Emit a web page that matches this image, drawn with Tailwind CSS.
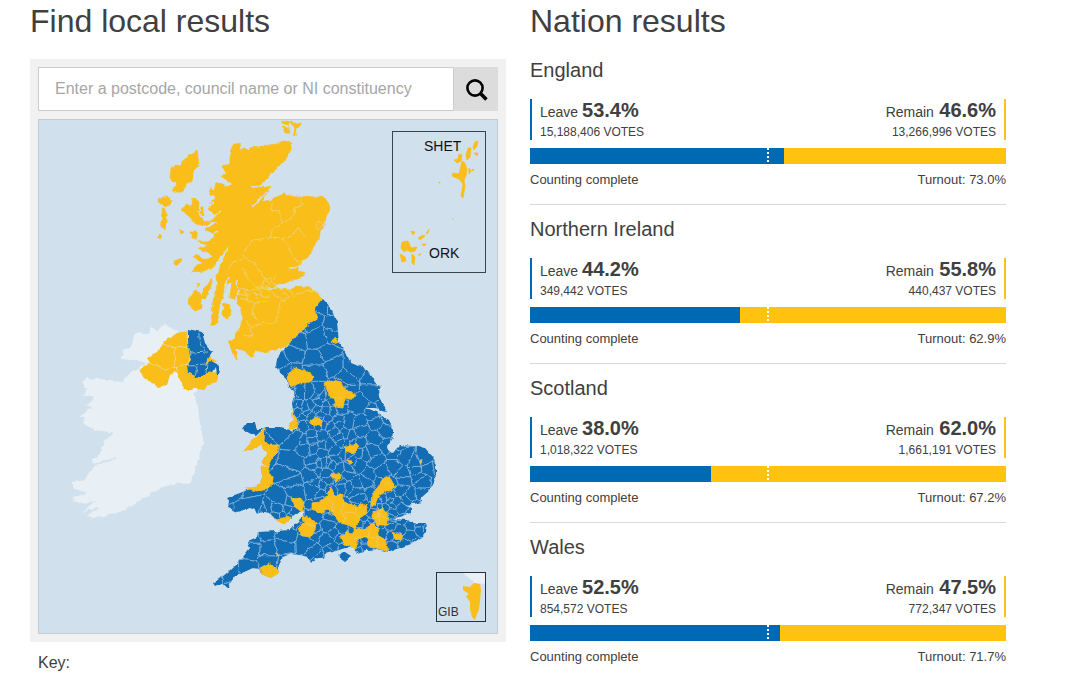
<!DOCTYPE html>
<html lang="en">
  <head>
    <meta charset="UTF-8" />
    <meta name="viewport" content="width=device-width, initial-scale=1.0" />
    <title>Results</title>
    <script src="https://cdn.jsdelivr.net/npm/@tailwindcss/browser@4"></script>
  </head>
  <body
    class="bg-white text-[#404040] font-['Liberation_Sans',Arial,sans-serif] overflow-hidden"
  >
    <div class="flex h-[676px] pl-[30px] pt-[3px] gap-6">
      <!-- Local results -->
      <section class="w-[476px]">
        <h1 class="text-[32px] leading-9">Find local results</h1>
        <div class="mt-5 h-[583px] bg-[#f1f1f1] p-2">
          <form class="flex h-11">
            <input
              type="text"
              class="w-[415px] border border-r-0 border-[#ccc] bg-white pl-4 text-base placeholder:text-[#a6a6a6]"
              placeholder="Enter a postcode, council name or NI constituency"
            />
            <button
              type="button"
              class="flex w-[45px] items-center justify-center border-l border-[#ccc] bg-[#dcdcdc]"
            >
              <svg
                class="mt-0.5 ml-0.5 h-6 w-6"
                viewBox="0 0 24 24"
                fill="none"
                stroke="#000"
              >
                <circle cx="10" cy="10" r="7.6" stroke-width="2.6" />
                <path d="M15.3 15.3L21.4 21.4" stroke-width="3.6" />
              </svg>
            </button>
          </form>

          <!-- Map -->
          <div class="mt-2 h-[515px] border border-[#c3ccd3] bg-[#d0e0ec]">
            <svg class="h-[513px] w-[458px]" viewBox="39 120 458 513">
              <defs>
                <filter id="rough" x="0" y="0" width="1" height="1" color-interpolation-filters="sRGB">
                  <feTurbulence type="fractalNoise" baseFrequency="0.16" numOctaves="2" seed="4" />
                  <feDisplacementMap in="SourceGraphic" scale="4.5" xChannelSelector="R" yChannelSelector="G" />
                </filter>
                <path
                  id="ew"
                  d="M322 299L332 310 337 322 339 342 345 350 350 362 365 368 372 378 377 385 381 387 378 389 379 397 387 412 382 411 375 408 365 408 376 411 388 420 393 430 393 438 387 447 388 450 393 453 397 448 400 445 413 446 425 448 433 457 436 466 436 477 430 490 422 497 422 502 413 504 405 505 411 508 411 513 400 517 392 519 407 520 412 523 427 523 426 532 422 537 413 542 410 544 402 547 390 552 387 552 378 549 367 550 358 553 353 547 345 548 333 552 325 554 324 559 315 558 311 563 308 557 300 555 290 554 283 557 279 565 277 572 271 578 262 574 259 569 253 568 242 573 233 578 228 588 222 583 215 586 213 583 222 577 228 572 243 557 250 548 248 542 257 538 258 532 277 531 290 530 297 522 303 516 304 510 297 513 290 518 283 523 275 519 270 513 263 512 257 514 255 510 250 508 237 512 228 508 229 502 226 498 240 493 247 490 257 487 263 478 261 467 265 467 262 462 267 453 260 445 250 450 243 452 250 447 255 438 265 428 280 428 290 430 300 429 297 425 295 417 293 410 292 403 295 393 288 387 287 380 282 375 276 367 277 358 283 350 290 343 295 337 303 332 305 327 312 322 318 318 317 313 315 308Z"
                />
                <clipPath id="ewClip"><use href="#ew" /></clipPath>
              </defs>

              <g filter="url(#rough)">
                <rect x="39" y="120" width="458" height="513" fill="#d0e0ec" />

                <!-- Republic of Ireland -->
                <path
                  fill="#e8eff5"
                  d="M120 359L125 353 122 350 130 348 133 342 132 338 137 333 148 333 152 328 157 331 165 323 170 328 178 331 170 355 190 380 198 390 193 393 198 407 200 425 203 443 198 460 193 477 192 483 177 483 160 488 148 495 137 502 125 510 110 515 92 518 88 515 100 507 82 512 95 502 75 503 73 497 87 493 72 487 72 482 85 480 90 472 95 465 92 462 102 450 103 442 115 433 95 430 82 423 85 418 80 415 93 407 85 405 95 398 82 395 87 390 82 382 87 378 110 380 122 382 130 373 147 363 134 360Z"
                />
                <path fill="none" d="M91 433L96 438 103 441M90 465L101 463 117 458" stroke="#d0e0ec" stroke-width="1.5" />

                <!-- Northern Ireland -->
                <path
                  fill="#fabe1b"
                  d="M188 331L177 333 168 338 162 345 157 353 147 358 150 363 139 370 145 378 158 387 167 385 170 375 175 372 180 380 185 390 192 390 194 387 202 391 208 385 217 380 217 372 208 370 207 364 218 361 210 358Z"
                />
                <path
                  fill="#126db5"
                  d="M188 329L202 332 205 343 212 352 207 360 206 365 211 361 219 365 220 373 217 375 216 367 213 372 207 373 202 377 195 378 193 375 188 372 187 365 191 360 188 347Z"
                />
                <path
                  fill="none"
                  stroke="#e0e7dc"
                  stroke-width="0.6"
                  d="M187 331L188 347 191 354 188 365M162 345L176 347 190 346M176 347L174 362 178 372M150 363L165 370 187 364M199 333L199 340 205 351M190 353L208 352M188 365L207 364M197 366L195 376M207 364L206 373"
                />

                <!-- Scotland -->
                <g fill="#fabe1b" stroke="#fabe1b" stroke-width="0.8">
                  <path
                    d="M234 143L240 145 241 150 245 148 249 150 250 147 259 148 270 145 278 144 283 141 292 142 291 149 288 156 280 166 271 173 263 183 258 186 270 187 267 193 262 202 271 200 283 194 297 196 312 197 323 196 327 200 330 208 327 215 323 228 318 239 315 245 308 257 300 264 290 268 287 272 297 267 299 270 305 273 302 277 293 280 283 284 273 286 280 289 290 290 298 286 307 287 318 293 322 299 315 308 317 313 318 318 312 322 305 327 303 332 295 337 290 343 275 350 262 352 255 350 252 358 243 350 235 348 237 360 233 355 231 348 228 343 233 340 240 327 243 318 242 310 237 303 236 294 234 300 230 296 232 282 226 286 223 296 219 307 218 318 216 325 210 325 212 315 213 303 214 295 218 285 217 276 222 262 229 247 218 258 214 267 204 272 192 271 197 265 204 263 193 258 197 255 209 260 213 256 198 248 208 246 198 241 208 241 215 237 210 232 205 230 217 223 212 220 221 213 215 215 208 208 213 205 208 203 217 198 210 195 210 187 215 190 217 183 225 187 232 183 222 177 227 172 222 167 230 163 230 152Z"
                  />
                  <!-- Western Isles -->
                  <path
                    d="M197 150L198 158 199 166 193 172 192 181 186 184 181 192 173 192 176 184 170 178 171 168 180 165 186 158ZM158 200L168 196 171 202 167 207 159 202ZM162 209L166 210 166 222 165 229 160 227 163 218ZM157 237L161 233 162 236 159 239Z"
                  />
                  <!-- Skye and the inner isles -->
                  <path
                    d="M193 197L199 203 198 212 204 222 213 220 205 226 196 224 190 217 181 210 186 204 192 207ZM201 207L203 207 203 215 200 213ZM190 232L197 232 197 240 192 237ZM174 261L181 258 180 263 175 264ZM188 303L195 290 200 293 202 307 196 311 189 305ZM211 279L213 283 205 298 201 297 205 287ZM224 304L230 306 231 316 226 319 222 312ZM197 283L200 284 197 288ZM180 230L184 232 181 234Z"
                  />
                  <!-- Orkney on the mainland side -->
                  <path
                    d="M283 120L290 122 288 125 283 123ZM282 127L288 128 289 133 285 133ZM290 121L297 124 302 123 300 127 297 128 296 136 294 135 295 127 290 124Z"
                  />
                </g>
                <path
                  fill="none"
                  stroke="#d0e0ec"
                  stroke-width="1.4"
                  d="M252 187L262 186M253 206L258 202 266 192M229 247L222 256 217 262M229 277L225 288 224 296M237 280L238 292 236 302M215 216L221 212M268 288L276 288M208 202L214 204M211 235L218 231"
                />
                <path
                  fill="none"
                  stroke="#e6d898"
                  stroke-width="0.7"
                  d="M271 202L273 210 280 212 282 223 272 230 270 238 253 240 247 247 242 252 245 259 255 263 260 273 272 286M300 198L303 205 295 208 293 217 283 223M270 237L283 239 293 234 297 227 305 236M271 237L283 239 290 248 292 257 300 263M315 224L320 221 324 225 318 230 315 224M243 259L233 262 229 268M242 268L247 278 255 287 268 287M240 288L250 290 267 288 280 300 278 317 273 324 263 322 252 327 245 322M257 287L262 295 270 298M281 292L290 296 283 301 280 298M245 290L248 300 255 303 252 312 257 320M248 300L240 298M255 303L268 302M250 327L252 337 243 335M290 290L295 297 305 290 318 293M262 288L264 280 272 279M276 275L272 282 275 286M255 292L258 300M238 293L246 295 253 293 262 296"
                />

                <!-- England and Wales -->
                <use href="#ew" fill="#126db5" />
                <path
                  fill="#126db5"
                  d="M243 429L247 423 255 423 257 429 262 429 255 436 248 433ZM338 556L345 552 351 556 345 561Z"
                />
                <path
                  id="districts"
                  clip-path="url(#ewClip)"
                  fill="none"
                  stroke="#8fbbdf"
                  stroke-width="0.6"
                />
                <g fill="#fabe1b" stroke="#fabe1b" stroke-width="0.8">
                  <path d="M290 371L295 368 310 373 314 378 310 382 300 383 290 387 287 378Z" />
                  <path d="M331 342L336 338 339 342 334 344Z" />
                  <path
                    d="M325 383L335 380 341 383 345 390 353 391 356 397 350 399 345 398 343 407 335 406 333 398 328 395Z"
                  />
                  <path d="M292 412L297 422 299 428 288 428 290 423 294 420Z" />
                  <path d="M311 421L317 416 322 421 321 426 312 425Z" />
                  <path d="M345 448L357 443 359 447 352 454 346 452Z" />
                  <path d="M347 460L353 461 350 464Z" />
                  <path d="M330 475L340 474 341 478 336 482Z" />
                  <path
                    d="M312 503L320 502 327 496 330 487 335 495 343 495 344 503 357 506 366 504 367 513 360 518 355 530 368 528 373 523 377 527 378 535 385 540 388 551 377 548 368 546 367 538 358 538 355 548 345 545 340 537 347 532 353 533 353 526 340 523 335 517 330 510 317 513 312 510Z"
                  />
                  <path d="M292 498L300 497 304 503 302 512 295 507Z" />
                  <path
                    d="M303 516L308 518 316 522 315 530 310 537 300 535 299 530 305 523Z"
                  />
                  <path
                    d="M378 487L382 480 385 476 390 478 396 488 387 490 380 495 377 502 373 507 371 503 372 495Z"
                  />
                  <path d="M373 512L382 507 387 513 388 525 377 525 373 518Z" />
                  <path d="M390 532L402 535 403 540 396 539Z" />
                  <path d="M275 519L290 517 287 522 281 523Z" />
                  <path
                    d="M260 568L269 563 276 568 278 573 271 578 262 574Z"
                  />
                  <path
                    d="M243 452L255 438 265 428 264 440 269 445 279 445 278 452 272 458 268 466 271 475 272 478 271 487 257 491 245 488 257 487 263 478 261 467 265 467 262 462 267 453 260 445 250 450Z"
                  />
                </g>
                <g fill="#c9bf83">
                  <circle cx="278" cy="554" r="1.8" />
                  <circle cx="421.500" cy="462" r="1.8" />
                </g>
                <path
                  fill="none"
                  stroke="#e3d489"
                  stroke-width="0.6"
                  d="M327 498L333 505 333 513M344 503L340 510 345 518 343 524M344 512L354 513 357 506M354 513L360 518M333 398L345 397M376 513L387 518M380 508L379 525M374 518L383 514M355 538L368 537 370 529M368 537L378 538M378 536L377 547M305 523L315 526M262 466L270 467M382 480L390 487"
                />
              </g>

              <!-- Shetland and Orkney inset -->
              <rect x="392.500" y="131.500" width="93" height="141" fill="#d0e0ec" stroke="#3b444b" />
              <g fill="#fabe1b" stroke="#fabe1b" stroke-width="0.8">
                <path
                  d="M475 142L478 141 477 146 474 150 473 147ZM468 148L471 148 470 157 467 160 466 155ZM474 153L478 153 477 156ZM459 154L462 155 461 161 457 163 454 160 458 159ZM462 161L465 163 467 170 466 176 464 180 465 186 463 198 461 196 463 184 459 179 452 176 453 173 459 174 460 170ZM469 168L471 171 469 174ZM472 169L474 170 472 171Z"
                />
                <path
                  d="M402 242L408 241 411 248 417 247 415 251 411 252 407 250 404 252 401 248ZM400 254L405 257 406 261 402 262ZM412 254L415 257 414 265 412 263ZM411 231L415 232 413 235ZM418 238L423 235 425 236 420 240ZM426 234L429 229 428 233ZM422 244L426 244 424 246ZM419 254L421 254 419 256Z"
                />
                <circle cx="439.500" cy="182.500" r="0.6" />
                <circle cx="453" cy="219" r="0.3" />
              </g>
              <g class="text-sm" fill="#111">
                <text x="424" y="151">SHET</text>
                <text x="429" y="258">ORK</text>
              </g>

              <!-- Gibraltar inset -->
              <path d="M463 573H485V584L475 583Z" fill="#e8eff5" />
              <path
                fill="#fabe1b"
                d="M474 583L480 584 481 590 480 601 479 609 477 614 475 620 472 617 470 609 470 602 466 596 469 594 463 590 463 586 470 587Z"
              />
              <rect x="436.500" y="572.500" width="49" height="49" fill="none" stroke="#262f3b" />
              <text x="438" y="616" class="text-xs" fill="#333">GIB</text>
            </svg>
          </div>
        </div>
        <p class="mt-[9px] ml-2 text-base leading-6">Key:</p>
      </section>

      <!-- Nation results -->
      <section class="w-[476px]">
        <h1 class="text-[32px] leading-9">Nation results</h1>
        <div id="nations" class="mt-[7px]"></div>
      </section>
    </div>

    <script>
      const nations = [
        ["England", 53.4, "15,188,406", 46.6, "13,266,996", "73.0"],
        ["Northern Ireland", 44.2, "349,442", 55.8, "440,437", "62.9"],
        ["Scotland", 38.0, "1,018,322", 62.0, "1,661,191", "67.2"],
        ["Wales", 52.5, "854,572", 47.5, "772,347", "71.7"],
      ];

      document.getElementById("nations").innerHTML = nations
        .map(
          ([name, leave, leaveVotes, remain, remainVotes, turnout]) => `
          <article class="h-[159px] border-b border-[#d9d9d9] pt-3 last:border-b-0">
            <h2 class="text-xl leading-6">${name}</h2>
            <div class="mt-[17px] flex h-[41px] justify-between">
              <div class="border-l-2 border-[#0069b4] pl-2">
                <p class="text-sm leading-[22px]">Leave <b class="text-xl leading-[22px]">${leave.toFixed(1)}%</b></p>
                <p class="mt-px text-xs leading-[17px]">${leaveVotes} VOTES</p>
              </div>
              <div class="border-r-2 border-[#ffc20f] pr-2 text-right">
                <p class="text-sm leading-[22px]">Remain <b class="ml-[1.5px] text-xl leading-[22px]">${remain.toFixed(1)}%</b></p>
                <p class="mt-px text-xs leading-[17px]">${remainVotes} VOTES</p>
              </div>
            </div>
            <div class="relative mt-2 h-4 bg-[#ffc20f]">
              <div class="h-4 bg-[#0069b4]" style="width: ${leave}%"></div>
              <div class="absolute left-[237px] top-0 h-4 w-0.5 bg-[repeating-linear-gradient(to_bottom,#fff_0,#fff_2px,transparent_2px,transparent_4px)]"></div>
            </div>
            <div class="mt-1.5 flex justify-between text-[13px] leading-5">
              <span>Counting complete</span>
              <span>Turnout: ${turnout}%</span>
            </div>
          </article>`
        )
        .join("");

      // District borders: one cell per point, points packed tighter round the cities
      // x, y, width, height, spacing
      const zones = [
        [274, 296, 74, 70, 17],
        [274, 366, 70, 26, 15],
        [344, 366, 50, 50, 16],
        [290, 392, 54, 38, 7.5],
        [344, 416, 56, 36, 12],
        [222, 428, 62, 80, 24],
        [284, 430, 26, 78, 17],
        [310, 430, 42, 56, 8.5],
        [352, 452, 88, 46, 11.5],
        [250, 508, 50, 16, 8],
        [310, 486, 42, 38, 12],
        [352, 498, 24, 30, 8.5],
        [376, 498, 18, 30, 5.5],
        [394, 498, 40, 50, 9.5],
        [210, 524, 100, 66, 17],
        [310, 524, 84, 40, 10.5],
      ];
      let seed = 11;
      const rnd = () => (seed = (seed * 16807) % 2147483647) / 2147483647;
      const points = [];
      for (const [x, y, w, h, s] of zones)
        for (let j = s / 2; j < h; j += s)
          for (let i = s / 2; i < w; i += s)
            points.push([x + i + (rnd() - 0.5) * s * 0.95, y + j + (rnd() - 0.5) * s * 0.95]);

      let d = "";
      for (const p of points) {
        let cell = [[-22, -22], [22, -22], [22, 22], [-22, 22]].map(([a, b]) => [p[0] + a, p[1] + b]);
        for (const q of points) {
          if (q === p) continue;
          const nx = q[0] - p[0];
          const ny = q[1] - p[1];
          const side = (v) => (v[0] - (p[0] + q[0]) / 2) * nx + (v[1] - (p[1] + q[1]) / 2) * ny;
          const next = [];
          cell.forEach((a, i) => {
            const b = cell[(i + 1) % cell.length];
            const sa = side(a);
            const sb = side(b);
            if (sa <= 0) next.push(a);
            if (sa * sb < 0) {
              const t = sa / (sa - sb);
              next.push([a[0] + (b[0] - a[0]) * t, a[1] + (b[1] - a[1]) * t]);
            }
          });
          cell = next;
        }
        d += "M" + cell.map((v) => v[0].toFixed(1) + " " + v[1].toFixed(1)).join("L") + "Z";
      }
      document.getElementById("districts").setAttribute("d", d);
    </script>
  </body>
</html>
